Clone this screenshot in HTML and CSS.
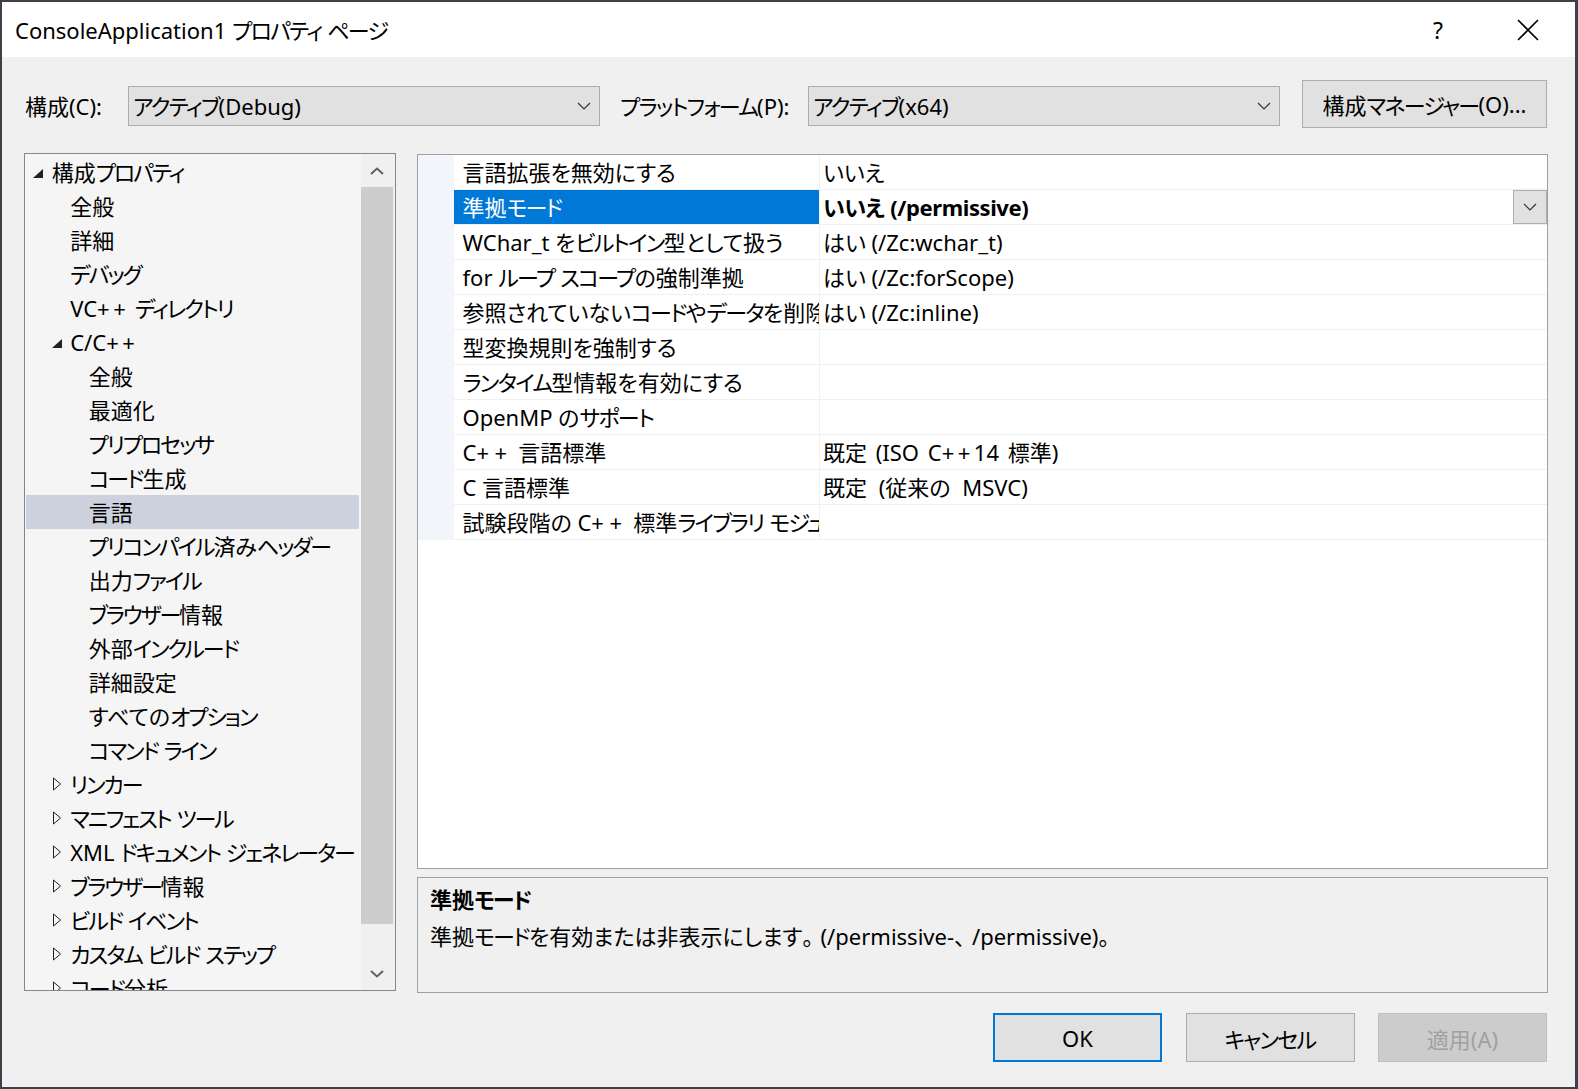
FILE: index.html
```html
<!DOCTYPE html>
<html lang="ja">
<head>
<meta charset="utf-8">
<title>ConsoleApplication1 プロパティ ページ</title>
<link rel="stylesheet" href="styles.css">
</head>
<body>
<div class="window">
  <div class="titlebar">
    <div class="title">ConsoleApplication1 <span class="k">プロパティ</span> <span class="k">ページ</span></div>
    <div class="tb-btn help">?</div>
    <div class="tb-btn close">
      <svg width="22" height="22" viewBox="0 0 22 22"><path d="M1 1 L21 21 M21 1 L1 21" stroke="#000" stroke-width="1.6" fill="none"/></svg>
    </div>
  </div>

  <div class="toolbar">
    <div class="tl-label lab1">構成(C):</div>
    <div class="combo">
      <span class="ctext"><span class="k">アクティブ</span>(Debug)</span>
      <svg class="chev" width="14" height="8" viewBox="0 0 14 8"><polyline points="1,1 7,7 13,1" fill="none" stroke="#333" stroke-width="1.2"/></svg>
    </div>
    <div class="tl-label lab2"><span class="k">プラットフォーム</span>(P):</div>
    <div class="combo">
      <span class="ctext"><span class="k">アクティブ</span>(x64)</span>
      <svg class="chev" width="14" height="8" viewBox="0 0 14 8"><polyline points="1,1 7,7 13,1" fill="none" stroke="#333" stroke-width="1.2"/></svg>
    </div>
    <div class="btn mgr">構成<span class="k">マネージャー</span>(O)...</div>
  </div>

  <div class="main">
    <div class="tree">
      <div class="tree-list">
        <div class="row l0"><span class="exp"><svg width="10" height="9" viewBox="0 0 10 9"><polygon points="10,0 10,9 0,9" fill="#222"/></svg></span><span class="txt">構成<span class="k">プロパティ</span></span></div>
        <div class="row l1"><span class="exp"></span><span class="txt">全般</span></div>
        <div class="row l1"><span class="exp"></span><span class="txt">詳細</span></div>
        <div class="row l1"><span class="exp"></span><span class="txt"><span class="k">デバッグ</span></span></div>
        <div class="row l1"><span class="exp"></span><span class="txt">VC<span class="pp">++</span> <span class="k">ディレクトリ</span></span></div>
        <div class="row l1"><span class="exp"><svg width="10" height="9" viewBox="0 0 10 9"><polygon points="10,0 10,9 0,9" fill="#222"/></svg></span><span class="txt">C/C<span class="pp">++</span></span></div>
        <div class="row l2"><span class="exp"></span><span class="txt">全般</span></div>
        <div class="row l2"><span class="exp"></span><span class="txt">最適化</span></div>
        <div class="row l2"><span class="exp"></span><span class="txt"><span class="k">プリプロセッサ</span></span></div>
        <div class="row l2"><span class="exp"></span><span class="txt"><span class="k">コード</span>生成</span></div>
        <div class="row l2 selected"><span class="exp"></span><span class="txt">言語</span></div>
        <div class="row l2"><span class="exp"></span><span class="txt"><span class="k">プリコンパイル</span>済み<span class="k">ヘッダー</span></span></div>
        <div class="row l2"><span class="exp"></span><span class="txt">出力<span class="k">ファイル</span></span></div>
        <div class="row l2"><span class="exp"></span><span class="txt"><span class="k">ブラウザー</span>情報</span></div>
        <div class="row l2"><span class="exp"></span><span class="txt">外部<span class="k">インクルード</span></span></div>
        <div class="row l2"><span class="exp"></span><span class="txt">詳細設定</span></div>
        <div class="row l2"><span class="exp"></span><span class="txt">すべての<span class="k">オプション</span></span></div>
        <div class="row l2"><span class="exp"></span><span class="txt"><span class="k">コマンド</span> <span class="k">ライン</span></span></div>
        <div class="row l1"><span class="exp"><svg width="10" height="14" viewBox="0 0 10 14"><polygon points="1.5,1 8.5,7 1.5,13" fill="none" stroke="#222" stroke-width="1"/></svg></span><span class="txt"><span class="k">リンカー</span></span></div>
        <div class="row l1"><span class="exp"><svg width="10" height="14" viewBox="0 0 10 14"><polygon points="1.5,1 8.5,7 1.5,13" fill="none" stroke="#222" stroke-width="1"/></svg></span><span class="txt"><span class="k">マニフェスト</span> <span class="k">ツール</span></span></div>
        <div class="row l1"><span class="exp"><svg width="10" height="14" viewBox="0 0 10 14"><polygon points="1.5,1 8.5,7 1.5,13" fill="none" stroke="#222" stroke-width="1"/></svg></span><span class="txt">XML <span class="k">ドキュメント</span> <span class="k">ジェネレーター</span></span></div>
        <div class="row l1"><span class="exp"><svg width="10" height="14" viewBox="0 0 10 14"><polygon points="1.5,1 8.5,7 1.5,13" fill="none" stroke="#222" stroke-width="1"/></svg></span><span class="txt"><span class="k">ブラウザー</span>情報</span></div>
        <div class="row l1"><span class="exp"><svg width="10" height="14" viewBox="0 0 10 14"><polygon points="1.5,1 8.5,7 1.5,13" fill="none" stroke="#222" stroke-width="1"/></svg></span><span class="txt"><span class="k">ビルド</span> <span class="k">イベント</span></span></div>
        <div class="row l1"><span class="exp"><svg width="10" height="14" viewBox="0 0 10 14"><polygon points="1.5,1 8.5,7 1.5,13" fill="none" stroke="#222" stroke-width="1"/></svg></span><span class="txt"><span class="k">カスタム</span> <span class="k">ビルド</span> <span class="k">ステップ</span></span></div>
        <div class="row l1"><span class="exp"><svg width="10" height="14" viewBox="0 0 10 14"><polygon points="1.5,1 8.5,7 1.5,13" fill="none" stroke="#222" stroke-width="1"/></svg></span><span class="txt"><span class="k">コード</span>分析</span></div>
      </div>
      <div class="vscroll">
        <div class="sb-arrow">
          <svg width="14" height="8" viewBox="0 0 14 8"><polyline points="1,7 7,1.5 13,7" fill="none" stroke="#606060" stroke-width="2"/></svg>
        </div>
        <div class="sb-thumb"></div>
        <div class="sb-track"></div>
        <div class="sb-arrow">
          <svg width="14" height="8" viewBox="0 0 14 8"><polyline points="1,1 7,6.5 13,1" fill="none" stroke="#606060" stroke-width="2"/></svg>
        </div>
      </div>
    </div>

    <div class="right">
      <div class="grid">
        <div class="grow"><div class="gut"></div><div class="name">言語拡張を無効にする</div><div class="val">いいえ</div></div>
        <div class="grow sel"><div class="gut"></div><div class="name">準拠<span class="k">モード</span></div><div class="val"><b>いいえ (/permissive)</b>
          <div class="dd"><svg width="14" height="8" viewBox="0 0 14 8"><polyline points="1,1 7,7 13,1" fill="none" stroke="#333" stroke-width="1.2"/></svg></div></div></div>
        <div class="grow"><div class="gut"></div><div class="name">WChar_t を<span class="k">ビルトイン</span>型として扱う</div><div class="val">はい (/Zc:wchar_t)</div></div>
        <div class="grow"><div class="gut"></div><div class="name">for <span class="k">ループ</span> <span class="k">スコープ</span>の強制準拠</div><div class="val">はい (/Zc:forScope)</div></div>
        <div class="grow"><div class="gut"></div><div class="name">参照されていない<span class="k">コード</span>や<span class="k">データ</span>を削除します</div><div class="val">はい (/Zc:inline)</div></div>
        <div class="grow"><div class="gut"></div><div class="name">型変換規則を強制する</div><div class="val"></div></div>
        <div class="grow"><div class="gut"></div><div class="name"><span class="k">ランタイム</span>型情報を有効にする</div><div class="val"></div></div>
        <div class="grow"><div class="gut"></div><div class="name">OpenMP の<span class="k">サポート</span></div><div class="val"></div></div>
        <div class="grow"><div class="gut"></div><div class="name">C<span class="pp">++</span> 言語標準</div><div class="val wide">既定 (ISO C<span class="pp">++</span>14 標準)</div></div>
        <div class="grow"><div class="gut"></div><div class="name">C 言語標準</div><div class="val wide2">既定 (従来の MSVC)</div></div>
        <div class="grow"><div class="gut"></div><div class="name">試験段階の C<span class="pp">++</span> 標準<span class="k">ライブラリ</span> <span class="k">モジュール</span>を有効にする</div><div class="val"></div></div>
      </div>
      <div class="desc">
        <div class="desc-title">準拠<span class="k">モード</span></div>
        <div class="desc-text">準拠<span class="k">モード</span>を有効または非表示にします<span class="fw">。</span>(/permissive-<span class="fw">、</span>/permissive)<span class="fw">。</span></div>
      </div>
    </div>
  </div>

  <div class="footer">
    <div class="btn fbtn ok">OK</div>
    <div class="btn fbtn"><span class="k">キャンセル</span></div>
    <div class="btn fbtn disabled">適用(A)</div>
  </div>
</div>
</body>
</html>
```

FILE: styles.css
```css
* { box-sizing: border-box; }

html, body {
  margin: 0;
  padding: 0;
}

body {
  width: 1578px;
  height: 1089px;
  background: #3b4049;
  overflow: hidden;
  font-family: "Noto Sans", "Noto Sans CJK JP", sans-serif;
  font-size: 22px;
  font-feature-settings: "palt";
  color: #000;
  padding: 2px 3px 2px 2px;
}

/* katakana runs are set tighter, as in the reference UI font */
.k { letter-spacing: -1.7px; }
.tree .k { letter-spacing: -2.1px; }
.pp { letter-spacing: 3.5px; }
.name .pp { letter-spacing: 5.5px; }
.fw { font-feature-settings: normal; letter-spacing: -4px; }

.window {
  width: 1573px;
  height: 1085px;
  background: #f0f0f0;
  display: flex;
  flex-direction: column;
}

/* title bar */
.titlebar {
  height: 55px;
  background: #fff;
  display: flex;
  align-items: center;
  padding-right: 13px;
  flex: none;
}
.title {
  flex: 1;
  padding-left: 13px;
  line-height: 30px;
  white-space: nowrap;
}
.tb-btn {
  width: 68px;
  height: 55px;
  display: flex;
  align-items: center;
  justify-content: center;
}
.help {
  margin-right: 22px;
  font-size: 23px;
}

/* toolbar */
.toolbar {
  height: 96px;
  flex: none;
  display: flex;
  align-items: flex-start;
  padding: 23px 28px 0 23px;
}
.tl-label {
  margin-top: 6px;
  height: 40px;
  line-height: 40px;
  white-space: nowrap;
}
.lab1 { width: 103px; }
.lab2 { width: 208px; padding-left: 20px; }
.combo {
  margin-top: 6px;
  width: 472px;
  height: 40px;
  background: #e1e1e1;
  border: 1px solid #adadad;
  display: flex;
  align-items: center;
  padding: 0 8px 0 4px;
}
.ctext {
  flex: 1;
  line-height: 38px;
  white-space: nowrap;
}
.combo .chev { flex: none; }

.btn {
  background: #e1e1e1;
  border: 1px solid #adadad;
  display: flex;
  align-items: center;
  justify-content: center;
  white-space: nowrap;
}
.mgr {
  margin-left: 22px;
  width: 245px;
  height: 48px;
}

/* main */
.main {
  height: 840px;
  flex: none;
  display: flex;
  padding-left: 22px;
  gap: 21px;
}

.tree {
  width: 372px;
  height: 838px;
  border: 1px solid #828790;
  background: #f5f5f5;
  display: flex;
  overflow: hidden;
}
.tree-list {
  width: 336px;
  height: 100%;
  overflow: hidden;
  padding-top: 1px;
}
.row {
  height: 34px;
  margin: 0 2px 0 1px;
  display: flex;
  align-items: center;
  white-space: nowrap;
}
.row.l0 { padding-left: 7px; }
.row.l1 { padding-left: 25.5px; }
.row.l2 { padding-left: 44px; }
.row.selected { background: #cdd1dd; }
.exp {
  width: 18.7px;
  flex: none;
  display: flex;
  align-items: center;
}
.l0 .exp svg, .l1 .exp svg[height="9"] { margin-top: 2px; }
.txt { line-height: 34px; }

.vscroll {
  width: 34px;
  height: 100%;
  background: #f0f0f0;
  display: flex;
  flex-direction: column;
}
.sb-arrow {
  height: 33px;
  flex: none;
  display: flex;
  align-items: center;
  justify-content: center;
  padding-right: 2px;
}
.sb-thumb {
  height: 737px;
  flex: none;
  width: 32px;
  background: #cdcdcd;
}
.sb-track { flex: 1; }

/* right column */
.right {
  width: 1131px;
  display: flex;
  flex-direction: column;
  padding-top: 1px;
  gap: 8px;
}
.grid {
  height: 715px;
  background: #fff;
  border: 1px solid #a0a0a0;
  flex: none;
}
.grow {
  height: 35px;
  display: flex;
}
.gut {
  width: 36px;
  flex: none;
  background: #f2f5fa;
}
.name {
  width: 366px;
  flex: none;
  border-right: 1px solid #f0f0f0;
  border-bottom: 1px solid #f0f0f0;
  padding-left: 8.5px;
  line-height: 34px;
  white-space: nowrap;
  overflow: hidden;
}
.val {
  flex: 1;
  position: relative;
  border-bottom: 1px solid #f0f0f0;
  padding-left: 3px;
  line-height: 34px;
  white-space: nowrap;
}
.val.wide { word-spacing: 3px; }
.val.wide2 { word-spacing: 6px; }
.grow.sel .name {
  background: #0078d7;
  color: #fff;
}
.val b {
  font-weight: 700;
  letter-spacing: -0.4px;
}
.dd {
  position: absolute;
  right: 0;
  top: 0;
  width: 34px;
  height: 34px;
  background: #e1e1e1;
  border: 1px solid #adadad;
  display: flex;
  align-items: center;
  justify-content: center;
}

.desc {
  height: 116px;
  flex: none;
  background: #f0f0f0;
  border: 1px solid #a0a0a0;
  padding: 6px 12px;
}
.desc-title {
  font-weight: 700;
  line-height: 30px;
}
.desc-text {
  margin-top: 5px;
  line-height: 34px;
  white-space: nowrap;
}

/* footer */
.footer {
  flex: none;
  display: flex;
  justify-content: flex-end;
  gap: 23.5px;
  padding: 20px 28px 0 0;
}
.fbtn {
  width: 169px;
  height: 49px;
}
.fbtn.ok {
  border: 2px solid #0078d7;
}
.fbtn.disabled {
  background: #cccccc;
  border-color: #bfbfbf;
  color: #a0a0a0;
}
```
